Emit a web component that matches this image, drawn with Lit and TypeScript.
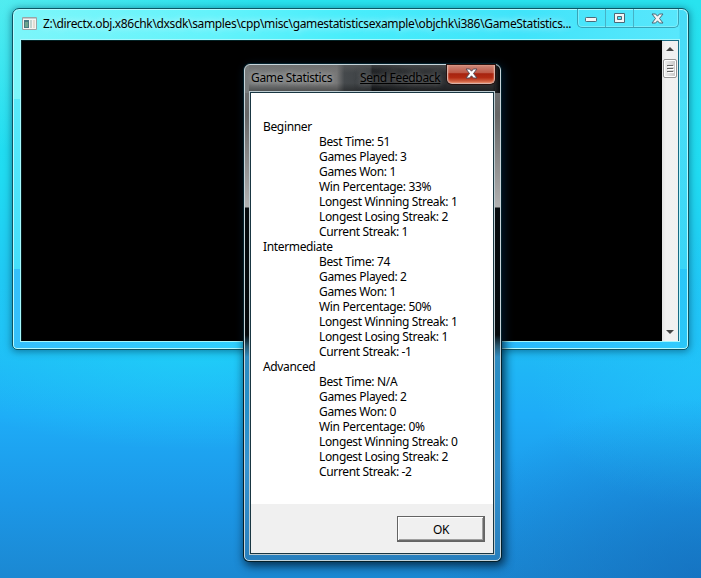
import { LitElement, html, css, svg } from "lit";
import { customElement } from "lit/decorators.js";

const levels: [string, string[]][] = [
  ["Beginner", ["Best Time: 51", "Games Played: 3", "Games Won: 1", "Win Percentage: 33%", "Longest Winning Streak: 1", "Longest Losing Streak: 2", "Current Streak: 1"]],
  ["Intermediate", ["Best Time: 74", "Games Played: 2", "Games Won: 1", "Win Percentage: 50%", "Longest Winning Streak: 1", "Longest Losing Streak: 1", "Current Streak: -1"]],
  ["Advanced", ["Best Time: N/A", "Games Played: 2", "Games Won: 0", "Win Percentage: 0%", "Longest Winning Streak: 0", "Longest Losing Streak: 2", "Current Streak: -2"]],
];

const cross = svg`<path d="M1 1H4.6L6.5 3.2L8.4 1H12L8.5 5.5L12 10H8.4L6.5 7.8L4.6 10H1L4.5 5.5Z"/>`;

@customElement("console-window")
class ConsoleWindow extends LitElement {
  static styles = css`
    :host { display: flex; flex-direction: column; box-sizing: border-box; border: 1px solid #0b5564; border-radius: 7px 7px 5px 5px;
      box-shadow: inset 0 0 0 1px #b4fbff, 0 1px 7px 1px #003c5880;
      background: linear-gradient(90deg, #fff0 0 98.7%, #16b8e840 98.8%), linear-gradient(90deg, #7cf6fa, #63f3fb 30%, #48edfb 50%, #40e4fa 75%, #5ae7fc) top/100% 90px no-repeat, linear-gradient(90deg, #35c0fb, #2fd3fd 40%, #29bafb 75%, #31ccfd) bottom/100% 80px no-repeat, linear-gradient(#65f1fa, #3bd9fb); padding: 0 8px 7px 7px; }
    .bar { height: 30px; flex: none; display: flex; padding-left: 1px; }
    .app { width: 15px; height: 13px; margin: 8px 6px 0 1px; flex: none; }
    .title { flex: 1; white-space: nowrap; line-height: 30px; text-shadow: 0 0 6px #d5ffffcc, 0 0 8px #d5ffffaa; }
    .controls { display: grid; grid-template-columns: 28px 28px 46px; height: 19px; width: 102px; box-sizing: border-box; border: 1px solid #38a3b7; border-top: 0; border-radius: 0 0 5px 5px; box-shadow: inset 0 0 0 1px #a5f5fc80; flex: none; margin-right: 1px; }
    .controls span { display: grid; place-items: center; border-right: 1px solid #46b2c6; box-sizing: border-box; }
    .controls span:last-child { border: 0; padding-bottom: 0; }
    .controls svg { fill: #f5f5f5; stroke: #4b6978; }
    .client { flex: 1; display: flex; background: #000; border: 1px solid #a6f7fc; border-right-color: #b9f5fd; min-height: 0; }
    .screen { flex: 1; border-top: 1px solid #042326; border-left: 1px solid #032024; }
    .scroll { width: 17px; box-sizing: border-box; border-right: 1px solid #176a83; border-top: 1px solid #176a83; background: linear-gradient(90deg, #e5e5e5, #f1f1f1 25%, #f0f0f0); display: flex; flex-direction: column; align-items: center; }
    .up { margin-top: 6px; height: 5px; } .thumb { margin-top: 7px; width: 14px; height: 19px; box-sizing: border-box; border: 1px solid #969696; border-radius: 2px; box-shadow: inset 0 0 0 1px #fff; background: linear-gradient(90deg, #f4f4f4, #dcdcdc 50%, #c5c5c5); }
    .down { margin-top: auto; margin-bottom: 6px; height: 5px; }
    svg { display: block; }
  `;
  render() {
    return html`
      <div class="bar">
        <svg class="app" viewBox="0 0 15 13"><path fill="#f4f4f2" stroke="#98a4a5" d="M.5.5h14v12H.5z"/><path fill="#c8c8cc" d="M1 1h13v1H1z"/><path fill="#477b82" d="M2 3h5v8H2z"/><path fill="#6ba38b" d="M3 5h3v5H3z"/><path fill="#c2d5d0" d="M8 3h2v8H8z"/><path fill="#e2ddd2" d="M11 3h2v8h-2z"/></svg>
        <span class="title">Z:\\directx.obj.x86chk\\dxsdk\\samples\\cpp\\misc\\gamestatisticsexample\\objchk\\i386\\GameStatistics...</span>
        <div class="controls">
          <span><svg width="13" height="5" style="margin-top:3px"><rect x=".5" y=".5" width="11" height="4" rx=".8"/></svg></span>
          <span><svg width="13" height="10"><path fill-rule="evenodd" d="M1.5.5h10v9h-10zM4.5 3.5v3h4v-3z"/></svg></span>
          <span><svg width="13" height="11">${cross}</svg></span>
        </div>
      </div>
      <div class="client"><div class="screen"></div>
        <div class="scroll">
          <svg class="up" width="8" height="5"><path fill="#444" d="M0 4L4 0L8 4z"/></svg>
          <div class="thumb"><svg width="12" height="17"><path stroke="#666" d="M3 5.5h6M3 8.5h6M3 11.5h6"/><path stroke="#fff" d="M4 6.5h6M4 9.5h6M4 12.5h6"/></svg></div>
          <svg class="down" width="8" height="5"><path fill="#444" d="M0 0L4 4L8 0z"/></svg>
        </div>
      </div>`;
  }
}

@customElement("stats-dialog")
class StatsDialog extends LitElement {
  static styles = css`
    :host { display: flex; flex-direction: column; box-sizing: border-box; border: 1px solid #c5d4da; border-radius: 6px 6px 5px 5px; padding: 0 5px 5px 4px;
      box-shadow: 0 0 0 1px #03202b, 2px 3px 10px 2px #001b30d0;
      background: linear-gradient(90deg, #777b7c 0, #777 36%, #45494c 39%, #3d4144 49%, #16191c 50%, #2b2e31 65%, #303234 97%, #080a0c) top/100% 28px no-repeat,
        linear-gradient(#737678 0, #666 50px, #b1b1b1 142px, #060a0d 143px, #05090c 270px, #27576f 281px, #2f8bc0 292px, #238fca 340px, #3593d0 400px, #287fbd 495px); }
    .bar { height: 26px; display: flex; flex: none; line-height: 26px; padding-left: 2px; position: relative; background: linear-gradient(#6667 0, #0000 8px, #0000 18px, #0005); }
    .name, .feedback { text-shadow: 0 0 5px #bbb, 0 0 7px #999; white-space: nowrap; }
    .feedback { margin-left: 28px; text-decoration: underline; text-shadow: 0 0 5px #777, 0 0 6px #666; }
    .close { position: absolute; right: 0; top: 0; width: 48px; height: 19px; box-sizing: border-box; border: 1px solid #d8b1a7; border-top: 0; border-radius: 0 0 5px 5px; box-shadow: 0 0 0 1px #28110e, inset 0 0 2px #ffb69d; background: linear-gradient(#cb897a, #bd5745 45%, #a6230f 48%, #b22b13 70%, #dc7755); display: grid; place-items: center; padding-bottom: 2px; }
    .close svg { fill: #fff; stroke: #564a56; display: block; }
    .client { flex: 1; display: flex; flex-direction: column; border: 1px solid #bccbd0; background: #fff; box-shadow: inset 0 0 0 1px #193642; padding: 1px; }
    .stats { flex: 1; padding: 26px 0 0 12px; line-height: 15px; white-space: nowrap; }
    .row { padding-left: 56px; }
    .foot { height: 49px; background: #f0f0f0; display: flex; justify-content: flex-end; padding: 12px 8px 0 0; box-sizing: border-box; }
    .ok { font: inherit; letter-spacing: inherit; width: 88px; height: 26px; box-sizing: border-box; padding: 0; background: #f0f0f0; border: 1px solid #646464; border-radius: 0; box-shadow: inset -1px -1px #696969, inset 1px 1px #fff, inset -2px -2px #a0a0a0; color: #000; }
  `;
  render() {
    return html`
      <div class="bar"><span class="name">Game Statistics</span><span class="feedback">Send Feedback</span>
        <span class="close"><svg width="13" height="11">${cross}</svg></span></div>
      <div class="client">
        <div class="stats">${levels.map(([name, rows]) => html`<div>${name}</div>${rows.map((r) => html`<div class="row">${r}</div>`)}`)}</div>
        <div class="foot"><button class="ok">OK</button></div>
      </div>`;
  }
}

@customElement("app-root")
class AppRoot extends LitElement {
  static styles = css`
    :host { display: block; position: relative; width: 701px; height: 578px; overflow: hidden; color: #000;
      font: 12px "Noto Sans", "Open Sans", sans-serif; letter-spacing: -0.35px;
      background: radial-gradient(ellipse 260px 180px at 100% 100%, #1268b8a0, #1268b800),
        radial-gradient(ellipse 260px 150px at 0 0, #7af4f080, #7af4f000),
        radial-gradient(ellipse 300px 100px at 200px 350px, #20dcfa90, #20dcfa00),
        radial-gradient(ellipse 170px 140px at 701px 370px, #22c9faa0, #22c9fa00),
        linear-gradient(#28e3ef 0, #20dcf2 30%, #20bff5 57%, #1eacf7 72%, #1c98e8 86%, #1b88d2 100%); }
    .console { position: absolute; left: 12px; top: 8px; width: 677px; height: 342px; }
    .dialog { position: absolute; left: 244px; top: 64px; width: 257px; height: 497px; }
  `;
  render() {
    return html`<console-window class="console"></console-window><stats-dialog class="dialog"></stats-dialog>`;
  }
}
